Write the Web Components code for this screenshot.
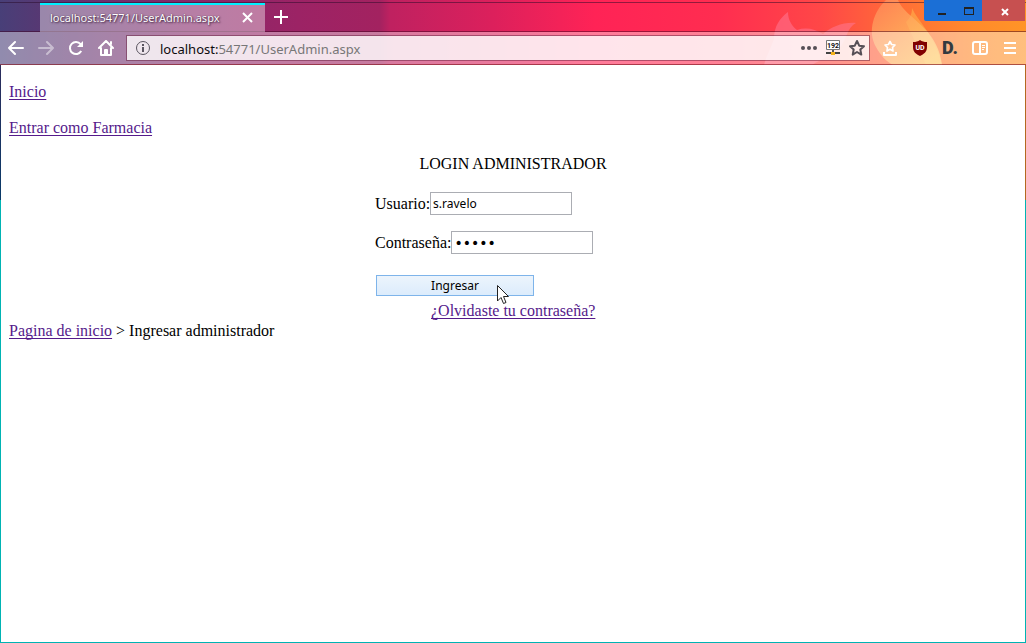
<!DOCTYPE html>
<html lang="es">
<head>
<meta charset="utf-8">
<title>localhost:54771/UserAdmin.aspx</title>
<style>
  html, body { margin: 0; min-height: 100%; }
  body { display: flex; min-height: 100vh; background: #fff; color: #000; font: 16px/20px "Liberation Serif", serif; }
</style>
</head>
<body>
<browser-window>
  <window-titlebar slot="titlebar">
    <browser-tab>localhost:54771/UserAdmin.aspx</browser-tab>
  </window-titlebar>
  <browser-toolbar slot="toolbar"></browser-toolbar>
  <login-page></login-page>
</browser-window>

<script>
const define = (name, html) => {
  const template = document.createElement('template');
  template.innerHTML = html;
  customElements.define(name, class extends HTMLElement {
    constructor() {
      super();
      this.attachShadow({ mode: 'open' }).append(template.content.cloneNode(true));
    }
  });
};

const RESET = `
  *, *::before { box-sizing: border-box; }
  button { border: 0; padding: 0; margin: 0; background: none; color: inherit; display: grid; place-items: center; flex: none; }
  svg { display: block; }`;

define('browser-window', `
<style>
  :host { box-sizing: border-box; flex: 1; display: flex; flex-direction: column; min-width: 0; position: relative; }
  header { position: relative; flex: none;
    background: linear-gradient(90deg, #483f78 0, #573873 4%, #85296a 18%, #9c2365 29%, #a32260 37%, #bf2160 38%, #dc205c 48%, #ff2356 58%, #ff2d50 70%, #ff4747 80%, #ff6f36 88%, #ff8b2b 95%, #ff9427 100%); }
  .art { position: absolute; top: 0; right: 0; }
  .bars { position: relative; }
  main { flex: 1; border: solid #00b3b3; border-width: 0 1px 1px; position: relative; }
  main::before, main::after { content: ""; position: absolute; left: -1px; top: 0; width: 1px; height: 135px; background: linear-gradient(#2c2c5c, #093a68); }
  main::after { left: auto; right: -1px; background: #b3691f; }
</style>
<header>
  <svg class="art" width="280" height="65" viewBox="0 0 280 65" aria-hidden="true">
    <defs><linearGradient id="flame" x1="0" y1="0" x2="0.7" y2="1"><stop offset="0" stop-color="#ff8a5c"/><stop offset="1" stop-color="#ffd468"/></linearGradient></defs>
    <path d="M18 65C20 57 25 48 28 39C28 26 34 18 42 12C42 20 46 26 51 30C60 27 69 29 77 34C85 27 97 22 110 23C101 28 101 38 95 46C86 55 74 60 66 65Z" fill="#ff7694" fill-opacity=".55"/>
    <path d="M160 22C164 18 166 14 166 8C172 22 188 33 196 65H180Z" fill="#ffa948" fill-opacity=".7"/>
    <path d="M140 0C128 11 121 31 130 47C135 56 140 61 147 65H196C194 50 188 38 178 28C165 15 156 10 152 0Z" fill="url(#flame)" fill-opacity=".75"/>
  </svg>
  <div class="bars"><slot name="titlebar"></slot><slot name="toolbar"></slot></div>
</header>
<main><slot></slot></main>`);

define('window-titlebar', `
<style>${RESET}
  :host { box-sizing: border-box; display: flex; height: 32px; padding-left: 40px; border-bottom: 1px solid rgba(60,0,30,.5); position: relative; color: #fff; }
  :host::before { content: ""; position: absolute; left: 0; right: 0; top: 2px; height: 1px; background: rgba(40,10,40,.5); }
  .new { width: 32px; height: 32px; padding-top: 2px; }
  .controls { margin-left: auto; display: flex; height: 21px; position: relative; margin-right: 1px; }
  .controls button { height: 21px; background: #1b6fd6; }
  .min { width: 32px; border-radius: 0 0 0 2px; }
  .max { width: 26px; }
  .controls .close { width: 43px; background: #c75050; padding: 2px 0 0 3px; }
</style>
<slot></slot>
<button class="new" aria-label="Nueva pestaña"><svg width="14" height="14" stroke="#fff" stroke-width="2"><path d="M7 0V14M0 7H14"/></svg></button>
<div class="controls">
  <button class="min" aria-label="Minimizar"><svg width="20" height="12" fill="#222"><path d="M8 8h8v2H8z"/></svg></button>
  <button class="max" aria-label="Maximizar"><svg width="10" height="8" fill="#222"><path fill-rule="evenodd" d="M0 0H10V8H0ZM1 2V7H9V2Z"/></svg></button>
  <button class="close" aria-label="Cerrar"><svg width="8" height="8" stroke="#fff" stroke-width="2"><path d="M1 1L7 7M7 1L1 7"/></svg></button>
</div>`);

define('browser-tab', `
<style>${RESET}
  :host { display: flex; position: relative; align-items: center; box-sizing: border-box; width: 225px; height: 29px; margin-top: 3px; padding: 0 12px 2px 10px; border-top: 2px solid #00f0ff; background: rgba(255,255,255,.4);
    color: #fff; font: 11px/16px "Noto Sans", sans-serif; text-shadow: 1px 1px 2px #402040, 0 0 1px #503050; white-space: nowrap; justify-content: space-between; }
</style>
<span><slot></slot></span>
<button aria-label="Cerrar pestaña"><svg width="11" height="11" stroke="#fff" stroke-width="2"><path d="M1 1L10 10M10 1L1 10"/></svg></button>`);

define('browser-toolbar', `
<style>${RESET}
  :host { box-sizing: border-box; display: flex; align-items: center; height: 33px; padding: 0 1px; background: rgba(255,255,255,.4); border-bottom: 1px solid rgba(130,20,30,.65); color: #fff; }
  button { width: 30px; height: 32px; }
  nav { display: flex; flex: none; }
  .url { display: flex; align-items: center; flex: 1; min-width: 0; height: 26px; margin: 0 5px; border: 1px solid rgba(100,30,60,.5); background: rgba(255,255,255,.8); background-clip: padding-box; }
  .url button { width: 24px; height: 24px; }
  .url .info { margin: 0 5px 0 4px; }
  label { flex: 1; min-width: 0; font: 13px/20px "Noto Sans", sans-serif; color: #777; padding-top: 1px; }
  b { font-weight: 400; color: #0c0c0d; }
  text { font-family: "Roboto", sans-serif; font-weight: 700; }
  .d { font: 900 18px/20px "Roboto", sans-serif; color: #333a40; }
</style>
<nav aria-label="Navegación">
  <button aria-label="Atrás"><svg width="16" height="16" fill="none" stroke="#fff" stroke-width="2" stroke-linecap="round" stroke-linejoin="round"><path d="M1 8H15M7 2L1 8L7 14"/></svg></button>
  <button aria-label="Adelante"><svg width="16" height="16" fill="none" stroke="#fff" stroke-opacity=".45" stroke-width="2" stroke-linecap="round" stroke-linejoin="round"><path d="M1 8H15M9 2L15 8L9 14"/></svg></button>
  <button aria-label="Recargar"><svg width="16" height="16" fill="none" stroke="#fff" stroke-width="2"><path d="M13.2 11A6 6 0 1 1 12.6 4.2"/><path d="M15 1V7H9Z" fill="#fff" stroke="none"/></svg></button>
  <button aria-label="Inicio"><svg width="16" height="16" fill="none" stroke="#fff" stroke-width="2" stroke-linecap="round" stroke-linejoin="round"><path d="M1 8L8 1L15 8M3 8V15H13V8"/><path d="M7 15V10H9V15"/><path d="M13 2V4"/></svg></button>
</nav>
<div class="url">
  <button class="info" aria-label="Información del sitio"><svg width="16" height="16" fill="none" stroke="#5a5560"><circle cx="8" cy="8" r="6.5"/><path d="M8 7V12M8 4V6" stroke-width="2"/></svg></button>
  <label><b>localhost:</b>54771/UserAdmin.aspx</label>
  <button aria-label="Acciones de página"><svg width="16" height="6" fill="#564f55"><circle cx="2" cy="3" r="2"/><circle cx="8" cy="3" r="2"/><circle cx="14" cy="3" r="2"/></svg></button>
  <button aria-label="Dirección IP"><svg width="16" height="16"><path d="M1.500.5H14.500V9.500H1.500Z" fill="#fff" stroke="#777"/><text x="8" y="8" font-size="7" text-anchor="middle" fill="#111">192</text><path d="M8 10V12" stroke="#555" stroke-width="2"/><path d="M1 13H15" stroke="#444" stroke-width="2"/><path d="M6 12H10V15H6Z" fill="#f5b21a"/></svg></button>
  <button aria-label="Marcador"><svg width="18" height="18" fill="none" stroke="#564f55" stroke-width="2" stroke-linejoin="round"><path d="M9 2L11.200 6.700L16 7.200L12.300 10.500L13.300 15.600L9 13L4.700 15.600L5.700 10.500L2 7.200L6.800 6.700Z"/></svg></button>
</div>
<nav aria-label="Extensiones">
  <button aria-label="Marcadores"><svg width="16" height="16" fill="none" stroke="#fff" stroke-linejoin="round"><path stroke-width="1.700" d="M8 1.500L9.600 4.500L13 5L10.500 7.500L11 11L8 9.300L5 11L5.500 7.500L3 5L6.400 4.500Z"/><path stroke-width="2" d="M2 12V15H14V12"/></svg></button>
  <button aria-label="uBlock"><svg width="16" height="16"><path d="M8 0C10 1.500 12 2 15 2V7C15 12 12 14 8 16C4 14 1 12 1 7V2C4 2 6 1.500 8 0Z" fill="#800000"/><text x="8" y="10" font-size="7" text-anchor="middle" fill="#fff">UD</text></svg></button>
  <button class="d" aria-label="Disconnect">D.</button>
  <button aria-label="Barra lateral"><svg width="16" height="14" fill="none" stroke="#fff" stroke-width="2"><rect x="1" y="1" width="14" height="12" rx="2"/><path d="M8 1V13"/><path d="M10 4.500H13M10 6.500H13M10 8.500H12" stroke-width="1"/></svg></button>
  <button aria-label="Menú"><svg width="12" height="12" fill="#fff"><path d="M0 0H12V2H0ZM0 5H12V7H0ZM0 10H12V12H0Z"/></svg></button>
</nav>`);

define('login-page', `
<style>${RESET}
  :host { display: block; padding: 17px 8px 8px; }
  a { color: #551a8b; text-decoration: underline; text-decoration-thickness: 1px; text-decoration-skip-ink: none; text-underline-offset: 2px; }
  p { margin: 0 0 16px; }
  form { width: 278px; max-width: 100%; margin: 0 auto; }
  h1 { font: inherit; margin: 0 0 18px; text-align: center; }
  .field { display: flex; align-items: center; height: 23px; margin: 0 0 16px 1px; white-space: nowrap; }
  input { width: 142px; height: 23px; border: 1px solid #abadb3; margin: 0; padding: 1px 2px; background: #fff; color: #000; font: 12px/17px "Noto Sans", sans-serif; outline: 0; }
  input[type=password] { font: 14px/17px "DejaVu Sans", sans-serif; }
  .submit { width: 158px; height: 21px; margin: 21px 0 5px 2px; border: 1px solid #7eb4ea; background: linear-gradient(#ecf4fc, #dcecfc); color: #000; font: 12px/17px "Noto Sans", sans-serif; position: relative; }
  .pointer { position: absolute; left: 119px; top: 8px; }
  .forgot { margin: 0 0 0 57px; }
  footer { display: block; }
</style>
<p><a href="#inicio">Inicio</a></p>
<p><a href="#farmacia">Entrar como Farmacia</a></p>
<form>
  <h1>LOGIN ADMINISTRADOR</h1>
  <div class="field"><label for="user">Usuario:</label><input id="user" type="text" value="s.ravelo"></div>
  <div class="field"><label for="pass">Contraseña:</label><input id="pass" type="password" value="admin"></div>
  <button class="submit" type="button">Ingresar
    <svg class="pointer" width="14" height="22" aria-hidden="true"><path d="M1.500 1.500V17L5 13.500L7.500 19.500L10 18.500L7.500 12.500H12.500Z" fill="#fff" stroke="#222"/></svg>
  </button>
  <p class="forgot"><a href="#clave">¿Olvidaste tu contraseña?</a></p>
</form>
<footer><a href="#inicio">Pagina de inicio</a> &gt; Ingresar administrador</footer>`);
</script>
</body>
</html>
